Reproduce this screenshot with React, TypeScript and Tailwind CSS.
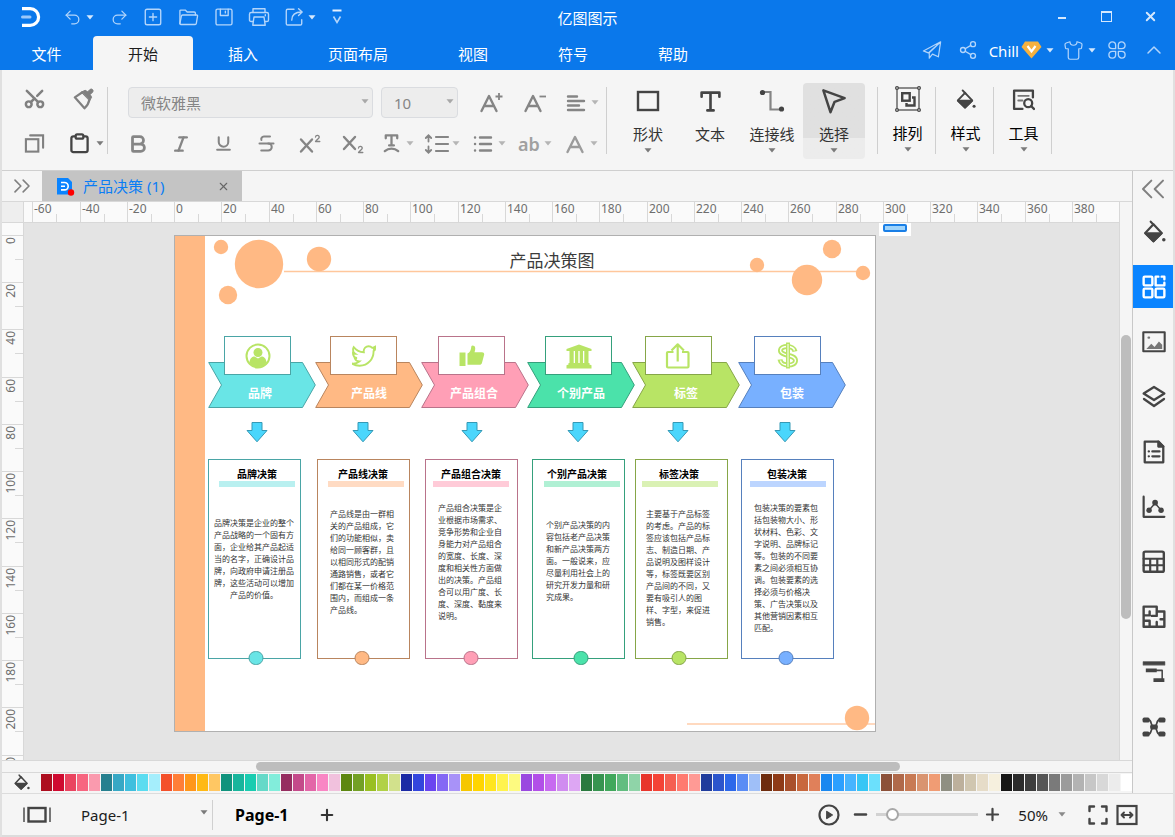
import type { ReactNode } from "react";
import {
  Bold,
  Italic,
  Underline,
  Strikethrough,
  Undo2,
  Redo2,
  Scissors,
  ChevronUp,
  ChevronsLeft,
  ChevronsRight,
  X,
  Plus,
  Minus,
  Shirt,
  Share2,
} from "lucide-react";
import { FaTwitter } from "react-icons/fa";

function Caret({ className = "text-[#7a7a7a]" }: { className?: string }) {
  return (
    <svg className={`shrink-0 ${className}`} width="8" height="5" viewBox="0 0 8 5" fill="currentColor">
      <path d="M0.5 0.3h7L4 4.6z" />
    </svg>
  );
}

function Svg({ size = 22, w = 2, children }: { size?: number; w?: number; children: ReactNode }) {
  return (
    <svg
      className="shrink-0"
      width={size}
      height={size}
      viewBox="0 0 22 22"
      fill="none"
      stroke="currentColor"
      strokeWidth={w}
      strokeLinejoin="round"
      strokeLinecap="round"
    >
      {children}
    </svg>
  );
}

function BucketIcon({ size = 22 }: { size?: number }) {
  return (
    <Svg size={size} w={2}>
      <path d="M8 1.5l3 3.2" />
      <path d="M10.5 4L3 12l7.5 7.5L18 12z" />
      <path d="M3 12.2h15l-7.5 7.3z" fill="currentColor" />
      <circle cx="20" cy="18" r="1.6" fill="currentColor" stroke="none" />
    </Svg>
  );
}

/* ---------- Title bar ---------- */

function QuickIcon({ label, className, children }: { label: string; className: string; children: ReactNode }) {
  return (
    <button aria-label={label} className={`flex items-center justify-center gap-1 ${className}`}>
      {children}
    </button>
  );
}

function Logo() {
  return (
    <svg width="20" height="22" viewBox="0 0 20 22" fill="none">
      <path d="M1 2.6h8.2a8.4 8.4 0 0 1 0 16.8H1" stroke="#fff" strokeWidth="3.2" />
      <path d="M1.5 11h7.5" stroke="#9cc8fa" strokeWidth="3" strokeLinecap="round" />
    </svg>
  );
}

function TitleBar() {
  return (
    <div className="grid h-9 grid-cols-[1fr_auto_1fr] items-center">
      <div className="flex items-center pb-0.5 pl-[21px] text-[#b3d5fb]">
        <Logo />
        <div className="flex items-center pl-[19px]">
          <QuickIcon label="撤销" className="w-9">
            <Undo2 size={19} strokeWidth={1.6} />
            <Caret className="text-[#d5e8fd]" />
          </QuickIcon>
          <QuickIcon label="重做" className="ml-[5px] w-9">
            <Redo2 size={19} strokeWidth={1.6} />
          </QuickIcon>
          <QuickIcon label="新建" className="w-8">
            <Svg size={20} w={1.5}>
              <rect x="2.5" y="2.5" width="17" height="17" rx="2" />
              <path d="M11 7v8M7 11h8" />
            </Svg>
          </QuickIcon>
          <QuickIcon label="打开" className="w-[38px]">
            <Svg size={21} w={1.4}>
              <path d="M2 17.5V4.2c0-.6.4-1 1-1h4.6l2 2H17c.8 0 1.2.5 1.2 1.2v2" />
              <path d="M4.8 8.4h14.8c.7 0 1 .5.9 1l-1.3 7.7c-.1.7-.6 1.2-1.3 1.2H3c-.7 0-1.1-.5-1-1.2l1.5-7.6c.1-.7.6-1.1 1.3-1.1z" />
            </Svg>
          </QuickIcon>
          <QuickIcon label="保存" className="w-[34px]">
            <Svg size={20} w={1.5}>
              <path d="M2.2 4c0-1 .7-1.7 1.7-1.7h14.2c1 0 1.7.7 1.7 1.7v14c0 1-.7 1.7-1.7 1.7H3.9c-1 0-1.7-.7-1.7-1.7z" />
              <path d="M7 2.5v6.8h8.6V2.5M12.5 4.5v2" />
            </Svg>
          </QuickIcon>
          <QuickIcon label="打印" className="w-9">
            <Svg size={22} w={1.4}>
              <path d="M5 6.5V2.8h12v3.7M5 15.5H3.2c-1 0-1.7-.7-1.7-1.6V8.2c0-1 .7-1.7 1.7-1.7h15.6c1 0 1.7.7 1.7 1.7v5.7c0 .9-.7 1.6-1.7 1.6H17" />
              <path d="M6 11h10l1.2 8.2H4.8zM17.3 8.8v1" />
            </Svg>
          </QuickIcon>
          <QuickIcon label="导出" className="w-[46px]">
            <Svg size={20} w={1.5}>
              <path d="M11 2.5H4c-1 0-1.5.5-1.5 1.5v14.5c0 .9.5 1.3 1.5 1.3h14c1 0 1.5-.4 1.5-1.3V14" />
              <path d="M8.5 14.5c0-6 4-9 11-9M16 1.8l4 3.7-4 3.8" />
            </Svg>
            <Caret className="text-[#d5e8fd]" />
          </QuickIcon>
          <QuickIcon label="自定义快速访问" className="w-7">
            <svg width="12" height="16" viewBox="0 0 12 16" fill="none" stroke="currentColor">
              <path d="M1.5 1.5h9" stroke="#e6f1fe" strokeWidth="2" />
              <path d="M2.5 7.500l3.500 6 3.500-6" strokeWidth="1.6" />
            </svg>
          </QuickIcon>
        </div>
      </div>
      <div className="text-[15px] leading-5 text-white">亿图图示</div>
      <div className="flex items-center justify-end pr-[7px] pb-1 text-[#d5e8fd]">
        <button aria-label="最小化" className="flex h-6 w-11 items-center justify-center pt-1">
          <span className="h-0.5 w-2 bg-current" />
        </button>
        <button aria-label="最大化" className="flex h-6 w-11 items-center justify-center">
          <span className="h-[11px] w-[11px] border border-t-2 border-current" />
        </button>
        <button aria-label="关闭" className="flex h-6 w-10 items-center justify-center pl-1">
          <X size={15} strokeWidth={3} />
        </button>
      </div>
    </div>
  );
}

const menuTabs = ["插入", "页面布局", "视图", "符号", "帮助"];

function MenuBar() {
  return (
    <div className="flex h-[34px] items-stretch text-[15px] leading-5 text-white">
      <nav className="flex">
        <button className="w-[93px] pt-0.5">文件</button>
        <button className="rounded-t-sm bg-[#f5f5f5] px-[35px] pt-0.5 text-[#1c1c1c]">开始</button>
        {menuTabs.map((t) => (
          <button key={t} className="px-[35px] pt-0.5">
            {t}
          </button>
        ))}
      </nav>
      <div className="ml-auto flex items-center pr-[9px] pb-1.5 text-[#b3d5fb]">
        <button aria-label="发送" className="flex w-9 justify-center">
          <Svg size={20} w={1.3}>
            <path d="M20.5 2L1.5 12l5.5 2.2zM20.5 2L18 18.5l-6.5-3M20.5 2L8 14v6l3-4" />
          </Svg>
        </button>
        <button aria-label="分享" className="flex w-9 justify-center">
          <Share2 size={20} strokeWidth={1.6} />
        </button>
        <button className="ml-[3px] flex items-center text-white">
          <span className="pt-0.5">Chill</span>
          <svg className="ml-0.5" width="21" height="18" viewBox="0 0 21 18">
            <path d="M4 0.5h13l3.5 5.5L10.5 17.5.5 6z" fill="#f6b13f" />
            <path d="M6.5 5l4 5.5 4-5.5" fill="none" stroke="#fff" strokeWidth="2.2" />
          </svg>
          <span className="ml-1">
            <Caret className="text-[#d5e8fd]" />
          </span>
        </button>
        <button aria-label="皮肤" className="ml-[9px] flex items-center gap-1">
          <Shirt size={21} strokeWidth={1.4} />
          <Caret className="text-[#d5e8fd]" />
        </button>
        <button aria-label="应用" className="ml-[11px] flex">
          <Svg size={20} w={1.5}>
            <path d="M9.5 9.5H5.8a3.7 3.7 0 1 1 3.7-3.7zM12.5 9.5V5.8a3.7 3.7 0 1 1 3.7 3.7zM9.5 12.5v3.7a3.7 3.7 0 1 1-3.7-3.7zM12.5 12.5h3.7a3.7 3.7 0 1 1-3.7 3.7z" />
          </Svg>
        </button>
        <button aria-label="折叠" className="ml-[15px] flex">
          <ChevronUp size={24} strokeWidth={1.5} />
        </button>
      </div>
    </div>
  );
}

/* ---------- Ribbon ---------- */

function Divider() {
  return <div className="mt-[17px] h-[67px] w-px shrink-0 bg-[#cfcfcf]" />;
}

function Tool({ label, className, children }: { label: string; className: string; children: ReactNode }) {
  return (
    <button aria-label={label} className={`flex h-[31px] items-center justify-center ${className}`}>
      {children}
    </button>
  );
}

function DropTool({ label, children }: { label: string; children: ReactNode }) {
  return (
    <button aria-label={label} className="flex h-[31px] w-[37px] items-center gap-0.5">
      <span className="flex w-[26px] items-center justify-center">{children}</span>
      <Caret className="text-[#b5b5b5]" />
    </button>
  );
}

function SelectBox({ label, value, className }: { label: string; value: string; className: string }) {
  return (
    <div className={`relative ${className}`}>
      <select
        aria-label={label}
        defaultValue={value}
        className="h-[31px] w-full appearance-none rounded-sm border border-[#dadce0] bg-[#ededed] px-3 text-[15px] leading-5 text-[#858585]"
      >
        <option>{value}</option>
      </select>
      <span className="pointer-events-none absolute top-3 right-1">
        <Caret className="text-[#a8a8a8]" />
      </span>
    </div>
  );
}

function BigButton({
  label,
  caret = true,
  active = false,
  dark = false,
  className,
  children,
}: {
  label: string;
  caret?: boolean;
  active?: boolean;
  dark?: boolean;
  className: string;
  children: ReactNode;
}) {
  return (
    <button
      className={`mt-[13px] flex h-[76px] flex-col items-center rounded-sm ${className} ${
        active ? "bg-linear-to-b from-[#e0e0e0] from-[72%] to-[#ececec] to-[72%]" : ""
      }`}
    >
      <span className={`flex items-center text-[#444] ${dark ? "h-8" : "h-9"}`}>{children}</span>
      <span
        className={`text-[15px] leading-5 whitespace-nowrap ${dark ? "mt-2 text-black" : "mt-[5px] text-[#333]"}`}
      >
        {label}
      </span>
      {caret && (
        <span className="mt-1">
          <Caret />
        </span>
      )}
    </button>
  );
}

function LetterA({ children }: { children?: ReactNode }) {
  return (
    <svg width="24" height="22" viewBox="0 0 24 22" fill="none" stroke="currentColor" strokeWidth="2.4">
      <path d="M2.5 19L10 4l7.5 15M5.5 14h9" strokeLinecap="round" strokeLinejoin="round" />
      {children}
    </svg>
  );
}

function Ribbon() {
  return (
    <div className="flex h-[101px] shrink-0 items-start border-b border-[#cfcfcf] bg-[#f5f5f5]">
      <div className="flex w-[105px] flex-col gap-3.5 pt-[13px] pl-3.5 text-[#808080]">
        <div className="flex gap-3.5">
          <Tool label="剪切" className="w-9">
            <Scissors size={23} strokeWidth={2.6} className="rotate-270" />
          </Tool>
          <Tool label="格式刷" className="w-9">
            <Svg size={22} w={2.2}>
              <path d="M9 4.500L1.800 9.300 11.500 20.300c2.500-2.500 4.300-5 4.800-8.300" />
              <path d="M8.500 4l3.700-1.700 2.500 1.500 2.500-2.500c1.800-1 3.600.8 2.600 2.600l-2.600 2.600 1.400 2.700-1.800 3.300z" fill="currentColor" strokeWidth="1" />
            </Svg>
          </Tool>
        </div>
        <div className="flex gap-3.5">
          <Tool label="复制" className="w-9">
            <Svg size={21} w={2.200}>
              <rect x="2" y="6.500" width="13" height="13" strokeLinejoin="miter" />
              <path d="M6.500 2.500h13.500v13" strokeLinejoin="miter" />
            </Svg>
          </Tool>
          <Tool label="粘贴" className="w-10 gap-1.5">
            <span className="text-[#444]">
              <Svg size={21} w={2.4}>
                <rect x="2.500" y="3.500" width="17" height="16.500" rx="2" />
                <rect x="7" y="1.500" width="8" height="4.500" rx="1.500" fill="#f5f5f5" />
              </Svg>
            </span>
            <Caret />
          </Tool>
        </div>
      </div>
      <Divider />
      <div className="flex w-[498px] shrink-0 flex-col gap-2.5 pt-[17px] text-[#858585]">
        <div className="flex items-center pl-5">
          <SelectBox label="字体" value="微软雅黑" className="w-[245px]" />
          <SelectBox label="字号" value="10" className="ml-2 w-[77px]" />
          <Tool label="增大字号" className="ml-[11px] w-11">
            <LetterA>
              <path d="M16.500 4.500h7M20 1v7" strokeWidth="1.800" />
            </LetterA>
          </Tool>
          <Tool label="减小字号" className="w-11">
            <LetterA>
              <path d="M16.500 4.500h6.500" strokeWidth="1.800" />
            </LetterA>
          </Tool>
          <div className="ml-1.5 flex">
            <DropTool label="对齐">
              <Svg size={22} w={2.4}>
                <path d="M3 4.500h9M3 9h16M3 13.500h11M3 18h16" />
              </Svg>
            </DropTool>
          </div>
        </div>
        <div className="flex items-center pl-2">
          <Tool label="加粗" className="w-[43px]">
            <Bold size={22} strokeWidth={3} />
          </Tool>
          <Tool label="倾斜" className="w-[43px]">
            <Italic size={20} strokeWidth={2.8} />
          </Tool>
          <Tool label="下划线" className="w-[43px]">
            <Underline size={19} strokeWidth={2.6} />
          </Tool>
          <Tool label="删除线" className="w-[43px]">
            <Strikethrough size={21} strokeWidth={2.3} />
          </Tool>
          <Tool label="上标" className="w-[43px]">
            <Svg size={22} w={2.400}>
              <path d="M2 6.500l11 12M13 6.500l-11 12" />
              <path d="M16.500 4c.3-2.200 4-2 3.700.3-.2 1.300-2.500 2.200-3.700 4.200h4.300" strokeWidth="1.300" />
            </Svg>
          </Tool>
          <Tool label="下标" className="w-[43px]">
            <Svg size={22} w={2.400}>
              <path d="M2 4l11 12M13 4l-11 12" />
              <path d="M16.500 15c.3-2.200 4-2 3.700.3-.2 1.300-2.500 2.200-3.700 4.200h4.300" strokeWidth="1.300" />
            </Svg>
          </Tool>
          <div className="flex gap-[9px] pl-1">
            <DropTool label="文字效果">
              <Svg size={21} w={2.400}>
                <path d="M5 5.500V2.500h12v3M11 2.500v10.500M8.500 13h5" />
                <path d="M4 19c4-3.500 10-3.500 14 0" />
              </Svg>
            </DropTool>
            <DropTool label="行距">
              <svg width="26" height="20" viewBox="0 0 26 20" fill="none" stroke="currentColor" strokeWidth="2.200" strokeLinecap="round">
                <path d="M12 3h12M12 10h12M12 17h12" />
                <path d="M4.500 1.500v6M1.800 4l2.700-2.700L7.200 4M4.500 12.500v6M1.800 16l2.700 2.700L7.200 16" strokeWidth="1.800" />
              </svg>
            </DropTool>
            <DropTool label="项目符号">
              <Svg size={22} w={2.400}>
                <path d="M8 4.500h11M8 11h11M8 17.500h11M3 4.500h.1M3 11h.1M3 17.500h.1" />
              </Svg>
            </DropTool>
            <DropTool label="大小写">
              <span className="text-[18px] leading-5 font-semibold text-[#a0a0a0]">ab</span>
            </DropTool>
            <DropTool label="字体颜色">
              <span className="pl-1 text-[#9c9c9c]">
                <LetterA />
              </span>
            </DropTool>
          </div>
        </div>
      </div>
      <Divider />
      <div className="flex pl-2.5">
        <BigButton label="形状" className="w-[62px]">
          <svg width="24" height="22" viewBox="0 0 24 22" fill="none" stroke="currentColor" strokeWidth="2.400">
            <rect x="2" y="2" width="20" height="18" />
          </svg>
        </BigButton>
        <BigButton label="文本" caret={false} className="w-[62px]">
          <Svg size={23} w={2.500}>
            <path d="M2.500 6.500V2.500h17v4M11 2.500v17M8 19.500h6" />
          </Svg>
        </BigButton>
        <BigButton label="连接线" className="w-[62px]">
          <svg width="26" height="24" viewBox="0 0 26 24" fill="none">
            <path d="M5 3h6.500v17.500H20" stroke="#858585" strokeWidth="2.200" />
            <circle cx="3.500" cy="3.500" r="2.600" fill="#444" />
            <circle cx="22.500" cy="20" r="2.600" fill="#444" />
          </svg>
        </BigButton>
        <BigButton label="选择" active className="w-[62px]">
          <Svg size={26} w={2.100}>
            <path d="M2 2l18 6.500-8.500 3.200L8 20.500z" />
          </Svg>
        </BigButton>
      </div>
      <div className="w-3" />
      <Divider />
      <BigButton label="排列" dark className="w-[57px] pl-0.5">
        <svg width="26" height="26" viewBox="0 0 26 26" fill="none" stroke="#444">
          <rect x="2" y="2" width="22" height="22" strokeWidth="1.200" />
          <rect x="7.200" y="7.200" width="7.500" height="7.500" strokeWidth="2.400" />
          <path d="M17 11.500h2.500v8h-8V17" strokeWidth="2.400" />
          <g fill="#f5f5f5" strokeWidth="1.200">
            <circle cx="2" cy="2" r="1.400" />
            <circle cx="24" cy="2" r="1.400" />
            <circle cx="2" cy="24" r="1.400" />
            <circle cx="24" cy="24" r="1.400" />
          </g>
        </svg>
      </BigButton>
      <Divider />
      <BigButton label="样式" dark className="w-[57px] pl-0.5">
        <BucketIcon size={21} />
      </BigButton>
      <Divider />
      <BigButton label="工具" dark className="w-[57px] pl-0.5">
        <Svg size={23} w={2.200}>
          <path d="M20 9V2.500H2V20h8" />
          <path d="M6 7.500h10M6 12h4" stroke="#777" strokeWidth="1.800" />
          <circle cx="15.500" cy="14.500" r="3.800" />
          <path d="M18.500 17.500l2.500 2.500" />
        </Svg>
      </BigButton>
      <Divider />
    </div>
  );
}

/* ---------- Document strip and rulers ---------- */

function DocumentTabs() {
  return (
    <div className="flex h-[30px] shrink-0 items-stretch bg-[#f5f5f5]">
      <button aria-label="展开" className="flex w-10 items-center justify-center text-[#808080]">
        <ChevronsRight size={28} strokeWidth={1.400} />
      </button>
      <div className="flex w-[200px] items-center bg-[#c4c4c4] pr-3 pl-3.5">
        <svg width="19" height="19" viewBox="0 0 19 19">
          <path d="M1 1h11l4 4v12.500H1z" fill="#0a84ff" />
          <path d="M5 5.500h3.500a3.700 3.700 0 0 1 0 7.400H5M5 9.200h4" fill="none" stroke="#fff" strokeWidth="1.600" />
          <circle cx="15" cy="15.500" r="3.200" fill="#f00" />
        </svg>
        <span className="ml-2 text-[15px] leading-5 text-[#0a7df5]">产品决策 (1)</span>
        <button aria-label="关闭文档" className="ml-auto text-[#666]">
          <X size={13} strokeWidth={2} />
        </button>
      </div>
    </div>
  );
}

const hMarks = Array.from({ length: 23 }, (_, i) => -60 + i * 20);
const vMarks = Array.from({ length: 12 }, (_, i) => i * 20);

function HorizontalRuler() {
  return (
    <div className="flex h-[22px] shrink-0 overflow-hidden border-y border-[#d8d8d8] bg-[#fafafa] text-xs leading-[14px] text-[#6e6e6e]">
      <div className="w-[22px] shrink-0 border-r border-[#d8d8d8] bg-[#eeeeee]" />
      <div className="w-2 shrink-0" />
      {hMarks.map((m, i) => (
        <div key={m} className={`flex shrink-0 border-l border-[#d8d8d8] ${i % 4 === 0 ? "w-12" : "w-[47px]"}`}>
          <div className="w-[23px] pl-px whitespace-nowrap">{m}</div>
          <div className="h-2 self-end border-l border-[#d8d8d8]" />
        </div>
      ))}
    </div>
  );
}

function VerticalRuler() {
  return (
    <div className="flex w-[22px] shrink-0 flex-col overflow-hidden border-r border-[#d8d8d8] bg-[#fafafa] text-xs leading-[18px] text-[#6e6e6e]">
      <div className="h-3 shrink-0" />
      {vMarks.map((m, i) => (
        <div
          key={m}
          className={`flex shrink-0 flex-col items-start border-t border-[#d8d8d8] ${i % 4 === 2 ? "h-12" : "h-[47px]"}`}
        >
          <div className="flex h-[23px] w-[18px] items-start">
            <span className="rotate-180 pb-px [writing-mode:vertical-rl]">{m}</span>
          </div>
          <div className="w-2 self-end border-t border-[#d8d8d8]" />
        </div>
      ))}
    </div>
  );
}

/* ---------- Diagram ---------- */

type Step = {
  name: string;
  title: string;
  lines: string[];
  fill: string;
  stroke: string;
  tint: string;
  chevron: number;
  box: number;
  label: number;
  arrow: number;
  card: number;
  heading: number;
  bar: number;
  dot: number;
  textX: number;
  textY: number;
  centered?: boolean;
  icon: ReactNode;
};

const dots = [
  [46, 11, 7],
  [84, 28, 24],
  [144, 23, 12],
  [53, 59, 9],
  [582, 29, 7],
  [657, 13, 9],
  [632, 44, 15],
  [688, 37, 7],
  [682, 482, 12],
];

const steps: Step[] = [
  {
    name: "品牌",
    title: "品牌决策",
    lines: ["品牌决策是企业的整个", "产品战略的一个固有方", "面，企业给其产品起适", "当的名字，正确设计品", "牌，向政府申请注册品", "牌，这些活动可以增加", "产品的价值。"],
    fill: "#69e5e6", stroke: "#4aa5a6", tint: "#b9f0f0",
    chevron: 33, box: 49, label: 85, arrow: 82, card: 33, heading: 82, bar: 44, dot: 81, textX: 39, textY: 281, centered: true,
    icon: (
      <svg width="26" height="26" viewBox="0 0 26 26">
        <circle cx="13" cy="13" r="11.500" fill="none" stroke="currentColor" strokeWidth="2" />
        <circle cx="13" cy="9.500" r="4.500" fill="currentColor" />
        <path d="M4.500 20c0-5 3-6.500 5-6.500l3.500 2 3.500-2c2 0 5 1.500 5 6.500-4 5.500-13 5.500-17 0z" fill="currentColor" />
      </svg>
    ),
  },
  {
    name: "产品线",
    title: "产品线决策",
    lines: ["产品线是由一群相", "关的产品组成，它", "们的功能相似，卖", "给同一顾客群，且", "以相同形式的配销", "通路销售，或者它", "们都在某一价格范", "围内，而组成一条", "产品线。"],
    fill: "#ffb984", stroke: "#b9855e", tint: "#ffdbc3",
    chevron: 140, box: 155, label: 194, arrow: 188, card: 142, heading: 188, bar: 153, dot: 187, textX: 155, textY: 272,
    icon: <FaTwitter size={24} fill="none" stroke="currentColor" strokeWidth={40} />,
  },
  {
    name: "产品组合",
    title: "产品组合决策",
    lines: ["产品组合决策是企", "业根据市场需求、", "竞争形势和企业自", "身能力对产品组合", "的宽度、长度、深", "度和相关性方面做", "出的决策。产品组", "合可以用广度、长", "度、深度、黏度来", "说明。"],
    fill: "#ff9fb6", stroke: "#b9738a", tint: "#ffcbd8",
    chevron: 246, box: 263, label: 299, arrow: 297, card: 250, heading: 296, bar: 258, dot: 296, textX: 263, textY: 266,
    icon: (
      <svg width="26" height="22" viewBox="0 0 26 22" fill="currentColor">
        <path d="M0.500 7.500h6v13.500h-6z" />
        <path d="M8.500 8.500c2.500-1 3.500-3.500 3.800-7 .4-1.600 3.700-1 3.900 1.500.1 1.600-.2 3-.7 4.200h7.500c1.800 0 2.600 1.300 2 3l-2 7.500c-.4 1.500-1.200 2-2.500 2h-12z" />
      </svg>
    ),
  },
  {
    name: "个别产品",
    title: "个别产品决策",
    lines: ["个别产品决策的内", "容包括老产品决策", "和新产品决策两方", "面。一般说来，应", "尽量利用社会上的", "研究开发力量和研", "究成果。"],
    fill: "#4be2aa", stroke: "#35a07c", tint: "#b0f0d4",
    chevron: 352, box: 370, label: 406, arrow: 403, card: 357, heading: 402, bar: 369, dot: 406, textX: 371, textY: 283,
    icon: (
      <svg width="26" height="26" viewBox="0 0 26 26" fill="currentColor">
        <path d="M13 1.500L25.500 6v2h-25V6zM3.500 8h4.200v12H3.500zM9 8h3.300v12H9zM13.700 8H17v12h-3.300zM18.300 8h4.200v12h-4.200zM2.500 20h21v1.500l2 .8V25.500h-25v-3.200l2-.8z" />
      </svg>
    ),
  },
  {
    name: "标签",
    title: "标签决策",
    lines: ["主要基于产品标签", "的考虑。产品的标", "签应该包括产品标", "志、制造日期、产", "品说明及图样设计", "等，标签既要区别", "产品间的不同，又", "要有吸引人的图", "样、字型，来促进", "销售。"],
    fill: "#b8e465", stroke: "#86a648", tint: "#daf1b4",
    chevron: 457, box: 470, label: 511, arrow: 503, card: 460, heading: 504, bar: 467, dot: 504, textX: 471, textY: 272,
    icon: (
      <svg width="28" height="28" viewBox="0 0 28 28" fill="none" stroke="currentColor" strokeWidth="2.200">
        <path d="M8.500 10H3c-.6 0-1 .4-1 1v13.500c0 .6.400 1 1 1h19.500c.6 0 1-.4 1-1V11c0-.6-.4-1-1-1H17M12.700 19.500V2.500M6.500 8.500l6.200-6.200 6.200 6.200" strokeLinejoin="round" />
      </svg>
    ),
  },
  {
    name: "包装",
    title: "包装决策",
    lines: ["包装决策的要素包", "括包装物大小、形", "状材料、色彩、文", "字说明、品牌标记", "等。包装的不同要", "素之间必须相互协", "调。包装要素的选", "择必须与价格决", "策、广告决策以及", "其他营销因素相互", "匹配。"],
    fill: "#78b0ff", stroke: "#5680bd", tint: "#bcd5ff",
    chevron: 563, box: 579, label: 617, arrow: 610, card: 566, heading: 612, bar: 575, dot: 611, textX: 579, textY: 266,
    icon: (
      <svg width="22" height="27" viewBox="0 0 22 27" fill="none">
        <path d="M18 9.500C17 3 3.500 3 3.500 8.500c0 6 15 3.500 15 10C18.500 25 4 24.500 3 17.500" stroke="currentColor" strokeWidth="5" />
        <path d="M17.500 8.500C16.500 3.500 3.500 3 3.500 8.500c0 6 15 3.500 15 10C18.500 24.500 4 24.500 3.500 18.500" stroke="#fff" strokeWidth="1.400" />
        <path d="M11 .5v26" stroke="currentColor" strokeWidth="4" />
        <path d="M11 2v23" stroke="#fff" strokeWidth="1" />
      </svg>
    ),
  },
];

function StepNodes({ s }: { s: Step }) {
  return (
    <>
      <svg className="absolute top-[126px]" style={{ left: s.chevron }} width="108" height="46" viewBox="0 0 108 46">
        <path d="M0.700 0.500H94.500L107.300 23L94.500 45.500H0.700L13.500 23z" fill={s.fill} stroke={s.stroke} />
      </svg>
      <div
        className="absolute top-[100px] flex h-[39px] w-[67px] items-center justify-center border bg-white text-[#b8e465]"
        style={{ left: s.box, borderColor: s.stroke }}
      >
        {s.icon}
      </div>
      <div
        className="absolute top-[150px] -translate-x-1/2 text-xs leading-4 font-bold whitespace-nowrap text-white"
        style={{ left: s.label }}
      >
        {s.name}
      </div>
      <svg className="absolute top-[185px] -translate-x-1/2" style={{ left: s.arrow }} width="22" height="22" viewBox="0 0 22 22">
        <path d="M6 1.500h10v8h5L11 20.800 1 9.500h5z" fill="#4ad6fc" stroke="#3599b5" />
      </svg>
      <div className="absolute top-[223px] h-[200px] w-[93px] border" style={{ left: s.card, borderColor: s.stroke }} />
      <h2
        className="absolute top-[230px] -translate-x-1/2 text-[10px] leading-4 font-bold whitespace-nowrap text-black"
        style={{ left: s.heading }}
      >
        {s.title}
      </h2>
      <div className="absolute top-[245px] h-1.5 w-[76px]" style={{ left: s.bar, backgroundColor: s.tint }} />
      <p
        className={`absolute text-[8px] leading-3 whitespace-nowrap text-[#333] ${s.centered ? "text-center" : ""}`}
        style={{ left: s.textX, top: s.textY }}
      >
        {s.lines.map((l) => (
          <span key={l} className="block">
            {l}
          </span>
        ))}
      </p>
      <div
        className="absolute top-[415px] h-[14px] w-[15px] -translate-x-1/2 rounded-full border"
        style={{ left: s.dot, backgroundColor: s.fill, borderColor: s.stroke }}
      />
    </>
  );
}

function Canvas() {
  return (
    <main className="relative min-w-0 flex-1 overflow-hidden bg-[#e4e4e4]">
      <div className="absolute top-3 left-[150px] h-[497px] w-[702px] border border-[#b0b0b0] bg-white">
        <div className="absolute inset-y-0 left-0 w-[30px] bg-[#ffb984]" />
        <svg className="absolute inset-0" width="700" height="495" viewBox="0 0 700 495" fill="#ffb984">
          <path d="M109 35.500h576" stroke="#ffc79c" strokeWidth="1.400" />
          <path d="M512 488h188" stroke="#ffd9bf" strokeWidth="2" />
          {dots.map(([cx, cy, r]) => (
            <circle key={cx} cx={cx} cy={cy} r={r + 0.2} />
          ))}
        </svg>
        <h1 className="absolute top-[13px] left-[377px] -translate-x-1/2 text-[17px] leading-6 whitespace-nowrap text-[#3c3c3c]">
          产品决策图
        </h1>
        {steps.map((s) => (
          <StepNodes key={s.name} s={s} />
        ))}
      </div>
      <div className="absolute top-0 left-[855px] flex h-[13px] w-8 items-start justify-center bg-white pt-px">
        <div className="h-2 w-6 rounded-xs border-2 border-[#1a7fe6] bg-[#9fd4fb]" />
      </div>
    </main>
  );
}

/* ---------- Palette ---------- */

const palette =
  "ad0e1f cf0a30 ea4460 f76580 fa9aae 26808f 37a8c5 3fbfde 5bdcf0 a5eefc f4502a ff7e38 ff961a ffb914 ffc763 10937d 18b59c 1accb0 65d9c8 82eddb 962d60 c44a8a e366a8 f986c4 f1c1dd 5c8710 73a025 99bf22 b1d147 d2e18c 1c2aa5 3345dd 6a45f0 8468f5 a892f8 f6c700 ffd500 ffe51f fff34d fdfa80 9a48e0 b24fe8 c76af0 d08cf0 dda6f3 2a7a3f 379450 41a85c 62bd80 8fd4a8 e8352c f44336 f55f52 ff7a70 ff9a95 203c9c 2c55cc 2d68ea 5a8cf5 9fbff8 6e2c0e 8e3a17 a9502c c8683e e0805a 1a88f0 2ca0ff 46b4ff 36c6f5 6be0fc 8c5038 b0694a c87a54 d99470 f09c74 8f8f82 bdb09c d0c6b0 e6dcc8 f6f0de 161616 2b2b2b 3d3d3d 565656 7a7a7a 9b9b9b b3b3b3 c7c7c7 d8d8d8 ececec".split(
    " ",
  );

function Palette() {
  return (
    <div className="flex h-[21px] shrink-0 items-start border-t border-[#d8d8d8] pt-px">
      <button aria-label="填充颜色" className="flex w-[39px] justify-center text-[#444]">
        <BucketIcon size={17} />
      </button>
      <div className="flex gap-px">
        {palette.map((c, i) => (
          <button key={i} aria-label={`#${c}`} className="h-[17px] w-[11px]" style={{ backgroundColor: `#${c}` }} />
        ))}
      </div>
      <div className="ml-auto h-[17px] w-[11px] bg-white" />
    </div>
  );
}

/* ---------- Side panel ---------- */

const sideIcons: { label: string; icon: ReactNode }[] = [
  { label: "填充", icon: <BucketIcon size={24} /> },
  {
    label: "符号库",
    icon: (
      <Svg size={24} w={2.200}>
        <rect x="1.500" y="1.500" width="8" height="8" rx="1" />
        <path d="M15 1.500h-2.500v8h8V7M18 1.500h2.500V4" />
        <rect x="1.500" y="12.500" width="8" height="8" rx="1" />
        <rect x="12.500" y="12.500" width="8" height="8" rx="1" />
      </Svg>
    ),
  },
  {
    label: "图片",
    icon: (
      <Svg size={24}>
        <rect x="1.200" y="2" width="19.600" height="17.500" strokeWidth="1.900" />
        <path d="M4 17.500l4.500-5 3 3 4-5 3 3v4z" fill="#777" stroke="none" />
        <path d="M6 7h.5" stroke="#777" />
      </Svg>
    ),
  },
  {
    label: "图层",
    icon: (
      <Svg size={24} w={2.100}>
        <path d="M11 1.800l9.500 6L11 13.800l-9.500-6z" />
        <path d="M1.800 12.800l9.200 6.500 9.200-6.500" />
      </Svg>
    ),
  },
  {
    label: "文档",
    icon: (
      <Svg size={24} w={2.100}>
        <path d="M2.500 1.500h12.500l4.500 4.500v14.500h-17z" />
        <path d="M15 1.500V6h4.500z" fill="currentColor" />
        <path d="M9.500 10.500h6.500M9.500 15h6.500M6.200 10.500h.1M6.200 15h.1" />
      </Svg>
    ),
  },
  {
    label: "图表",
    icon: (
      <Svg size={24} w={2}>
        <path d="M1.500 1.500v18.500h19" />
        <path d="M6 14.500l6-7 6 7" strokeWidth="1.300" />
        <g fill="currentColor" stroke="none">
          <circle cx="6.500" cy="14" r="2.500" />
          <circle cx="12" cy="7" r="2.600" />
          <circle cx="17.500" cy="14" r="2.500" />
        </g>
      </Svg>
    ),
  },
  {
    label: "表格",
    icon: (
      <Svg size={24} w={2.200}>
        <rect x="1.500" y="1.500" width="18.500" height="18.500" rx="1.500" />
        <path d="M1.500 8h18.500M1.500 14h18.500M7.500 8v12M14 8v12" strokeWidth="2" />
      </Svg>
    ),
  },
  {
    label: "平面图",
    icon: (
      <Svg size={24} w={2.200}>
        <path d="M1.500 1.500h12v4.500h7v14h-19zM1.500 9.500h5.500V6M13.500 6v4h-4.500M1.500 14.500h5.500v5.500M13.500 20v-4.500M20.500 13h-3.500" />
      </Svg>
    ),
  },
  {
    label: "甘特图",
    icon: (
      <Svg size={24} w={1.400}>
        <path d="M1 4.500v-3h20v3z" fill="currentColor" strokeWidth="0.500" />
        <path d="M3.500 9.500h10M10.500 18.500h10" strokeWidth="3.500" strokeLinecap="butt" />
        <path d="M13 9.500h5.500v9" />
      </Svg>
    ),
  },
  {
    label: "思维导图",
    icon: (
      <Svg size={24} w={1.500}>
        <path d="M4 4.500h2c3.500 0 1.500 6.500 5 6.500s1.500-6.500 5-6.500h2M4 17.500h2c3.500 0 1.500-6.500 5-6.500s1.500 6.500 5 6.500h2" />
        <g fill="currentColor" stroke="none">
          <rect x="0.500" y="2.300" width="6.500" height="4.600" rx="1.500" />
          <rect x="15" y="2.300" width="6.500" height="4.600" rx="1.500" />
          <rect x="0.500" y="15.200" width="6.500" height="4.600" rx="1.500" />
          <rect x="15" y="15.200" width="6.500" height="4.600" rx="1.500" />
          <rect x="7.500" y="8.800" width="7" height="4.500" rx="1.500" />
        </g>
      </Svg>
    ),
  },
];

function SidePanel() {
  return (
    <aside className="flex w-[41px] shrink-0 flex-col border-l border-[#c8c8c8] bg-[#f5f5f5]">
      <button aria-label="收起" className="mb-[3px] flex h-9 items-center justify-center text-[#808080]">
        <ChevronsLeft size={40} strokeWidth={1.200} />
      </button>
      <div className="flex flex-col gap-3">
        {sideIcons.map(({ label, icon }, i) => (
          <button
            key={label}
            aria-label={label}
            className={`flex h-[43px] items-center justify-center pl-px ${i === 1 ? "bg-[#0a84ff] text-white" : "text-[#444]"}`}
          >
            {icon}
          </button>
        ))}
      </div>
    </aside>
  );
}

/* ---------- Status bar ---------- */

function StatusBar() {
  return (
    <footer className="flex h-11 shrink-0 items-center border-t border-b-2 border-[#dcdcdc] bg-[#f5f5f5] text-[15px] leading-5 text-[#1c1c1c]">
      <button aria-label="视图" className="ml-5 flex text-[#444]">
        <svg width="30" height="18" viewBox="0 0 30 18" fill="none" stroke="currentColor">
          <rect x="6.500" y="2" width="17" height="13.500" strokeWidth="2.400" />
          <path d="M2 1.500v14.500M28 1.500v14.500" stroke="#777" strokeWidth="2" />
        </svg>
      </button>
      <div className="relative ml-[29px] w-[132px] border-r border-[#d0d0d0]">
        <select aria-label="页面" className="h-[30px] w-full appearance-none bg-transparent" defaultValue="Page-1">
          <option>Page-1</option>
        </select>
        <span className="pointer-events-none absolute top-2.5 right-1 flex">
          <Caret />
        </span>
      </div>
      <button className="ml-[22px] text-base leading-5 font-bold text-black">Page-1</button>
      <button aria-label="添加页面" className="ml-[30px] text-[#333]">
        <Plus size={18} strokeWidth={2.800} />
      </button>
      <div className="ml-auto flex items-center pr-[35px] text-[#444]">
        <button aria-label="播放" className="flex">
          <Svg size={22} w={2.200}>
            <circle cx="11" cy="11" r="9.500" />
            <path d="M8.800 7.500v7l5.500-3.500z" fill="currentColor" strokeWidth="1.400" />
          </Svg>
        </button>
        <button aria-label="缩小" className="ml-[11px] flex">
          <Minus size={19} strokeWidth={3} />
        </button>
        <input
          type="range"
          aria-label="缩放"
          defaultValue={11}
          className="ml-1.5 h-4 w-[102px] appearance-none bg-transparent [&::-webkit-slider-runnable-track]:h-[3px] [&::-webkit-slider-runnable-track]:bg-[#d2d2d2] [&::-webkit-slider-thumb]:-mt-[5px] [&::-webkit-slider-thumb]:h-[13px] [&::-webkit-slider-thumb]:w-[13px] [&::-webkit-slider-thumb]:appearance-none [&::-webkit-slider-thumb]:rounded-full [&::-webkit-slider-thumb]:border-2 [&::-webkit-slider-thumb]:border-[#a8a8a8] [&::-webkit-slider-thumb]:bg-white"
        />
        <button aria-label="放大" className="ml-[5px] flex">
          <Plus size={19} strokeWidth={2.800} />
        </button>
        <button className="ml-4 flex items-center gap-2.5 text-[#1c1c1c]">
          <span>50%</span>
          <Caret className="text-[#8a8a8a]" />
        </button>
        <button aria-label="全屏" className="ml-[21px] flex">
          <Svg size={22} w={2.400}>
            <path d="M7 2.500H2.500V7M15 2.500h4.500V7M7 19.500H2.500V15M15 19.500h4.500V15" />
          </Svg>
        </button>
        <button aria-label="适应宽度" className="ml-[7px] flex">
          <Svg size={22} w={2.200}>
            <rect x="1.500" y="2" width="19" height="18" strokeLinejoin="miter" />
            <path d="M5.500 11h11M8 8.500L5.500 11 8 13.500M14 8.500l2.500 2.500-2.500 2.500" strokeWidth="1.900" />
          </Svg>
        </button>
      </div>
    </footer>
  );
}

export default function App() {
  return (
    <div className="flex h-screen flex-col overflow-hidden bg-[#f5f5f5] font-['Noto_Sans','Noto_Sans_CJK_SC',sans-serif]">
      <header className="shrink-0 bg-[#0a78eb]">
        <TitleBar />
        <MenuBar />
      </header>
      <div className="flex min-h-0 flex-1 flex-col border-x-2 border-[#e0e0e0]">
        <Ribbon />
        <div className="flex min-h-0 flex-1">
          <div className="flex min-w-0 flex-1 flex-col">
            <DocumentTabs />
            <div className="flex min-h-0 flex-1">
              <div className="flex min-w-0 flex-1 flex-col">
                <HorizontalRuler />
                <div className="flex min-h-0 flex-1">
                  <VerticalRuler />
                  <Canvas />
                </div>
              </div>
              <div className="w-[13px] shrink-0 border-t border-l border-[#d8d8d8] bg-[#f5f5f5] px-px pt-[133px]">
                <div className="h-[284px] rounded-full bg-[#bdbdbd]" />
              </div>
            </div>
            <div className="h-3 shrink-0 border-t border-[#d8d8d8] px-[254px] pt-px">
              <div className="h-[9px] w-[644px] rounded-full bg-[#bdbdbd]" />
            </div>
            <Palette />
          </div>
          <SidePanel />
        </div>
        <StatusBar />
      </div>
    </div>
  );
}
